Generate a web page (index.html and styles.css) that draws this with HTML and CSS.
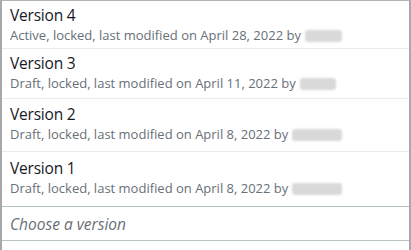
FILE: index.html
```html
<!DOCTYPE html>
<html>
<head>
<meta charset="utf-8">
<link rel="stylesheet" href="styles.css">
</head>
<body>
<div class="panel">
  <ul class="list">
    <li class="item item-a">
      <div class="title">Version 4</div>
      <div class="sub">Active, locked, last modified on April 28, 2022 by <span class="blur" style="width:37px"></span></div>
    </li>
    <li class="item item-b">
      <div class="title">Version 3</div>
      <div class="sub">Draft, locked, last modified on April 11, 2022 by <span class="blur" style="width:36px"></span></div>
    </li>
    <li class="item item-c">
      <div class="title">Version 2</div>
      <div class="sub">Draft, locked, last modified on April 8, 2022 by <span class="blur" style="width:50px"></span></div>
    </li>
    <li class="item item-d">
      <div class="title">Version 1</div>
      <div class="sub">Draft, locked, last modified on April 8, 2022 by <span class="blur" style="width:50px"></span></div>
    </li>
  </ul>
  <div class="choose">Choose a version</div>
</div>
</body>
</html>
```
FILE: styles.css
```css
html, body {
  margin: 0;
  padding: 0;
  background: #ffffff;
}
.panel {
  box-sizing: border-box;
  width: 411px;
  height: 250px;
  border-top: 1px solid #b4b4b4;
  border-left: 2px solid #a8a8a8;
  border-right: 2px solid #a8a8a8;
  font-family: "Open Sans", "Noto Sans", sans-serif;
  overflow: hidden;
}
.list {
  list-style: none;
  margin: 0;
  padding: 0;
}
.item {
  box-sizing: border-box;
  padding: 4px 8px 0 8px;
  border-bottom: 1px solid #e9ebed;
}
.item-a { height: 48px; }
.item-b { height: 50px; }
.item-c { height: 53px; padding-top: 5px; }
.item-d { height: 55px; padding-top: 6px; }
.item-d { border-bottom: 1px solid #b6c1c2; }
.title {
  font-size: 15.5px;
  line-height: 20px;
  color: #16191f;
  letter-spacing: -0.2px;
}
.sub {
  font-size: 13px;
  line-height: 19px;
  margin-top: 1px;
  color: #687078;
  white-space: nowrap;
  display: flex;
  align-items: center;
}
.blur {
  display: inline-block;
  height: 12px;
  margin-left: 4px;
  background: #d9d9d9;
  border-radius: 3px;
  filter: blur(1.2px);
}
.choose {
  box-sizing: border-box;
  height: 34px;
  padding: 7px 8px 0 8px;
  font-size: 15.5px;
  line-height: 20px;
  font-style: italic;
  color: #687078;
  border-bottom: 1px solid #b6c1c2;
}
```
